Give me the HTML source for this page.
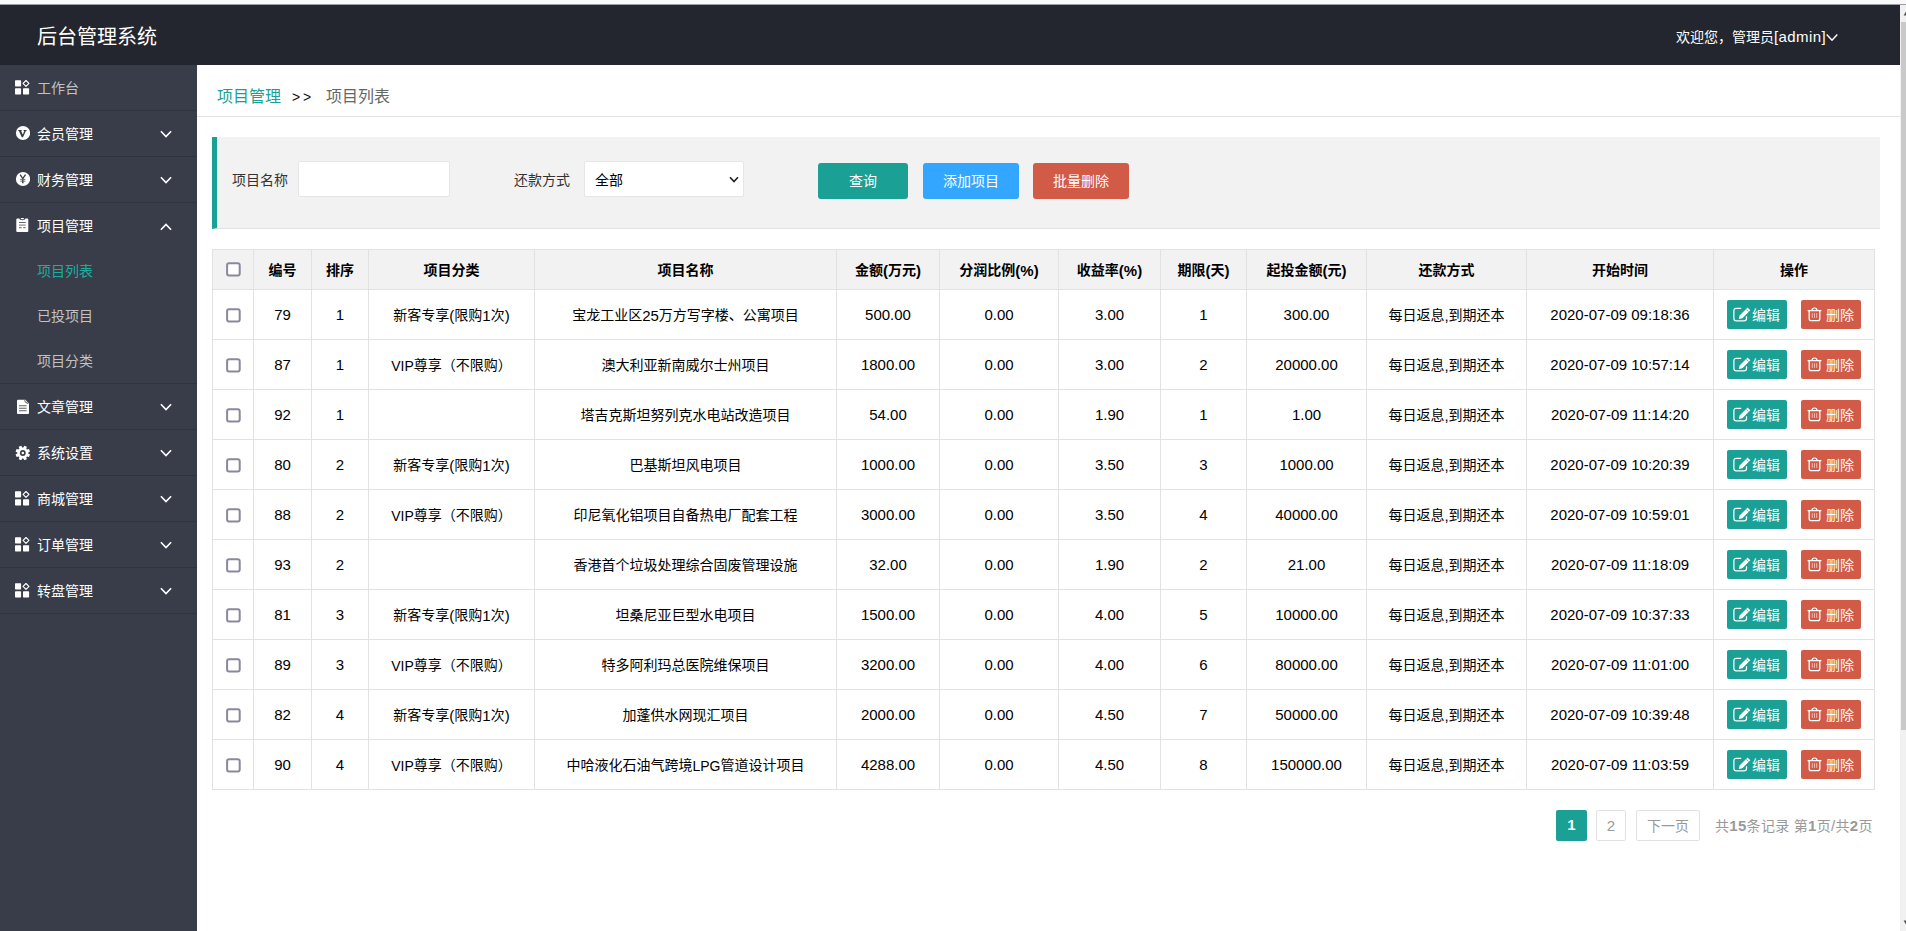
<!DOCTYPE html>
<html lang="zh-CN">
<head>
<meta charset="utf-8">
<title>后台管理系统</title>
<style>
*{box-sizing:border-box;margin:0;padding:0}
html,body{width:1906px;height:931px;overflow:hidden;background:#fff}
body{position:relative;font-family:"Liberation Sans","Noto Sans CJK SC",sans-serif;font-size:14px;color:#333}
a{text-decoration:none;color:inherit}
ul{list-style:none}
.abs{position:absolute}
/* browser strip */
#strip{left:0;top:0;width:1906px;height:4px;background:#f9f9fb}
#stripline{left:0;top:4px;width:1906px;height:1px;background:#9c9da1}
/* header */
#hd{left:0;top:5px;width:1900px;height:60px;background:#23262e;color:#fff}
#logo{left:37px;top:2px;height:60px;line-height:60px;font-size:20px;color:#fff;white-space:nowrap}
#user{left:1676px;top:1px;height:60px;line-height:61px;font-size:14px;color:#fff;white-space:nowrap}
#userchev{left:1825px;top:27.6px}
/* sidebar */
#side{left:0;top:65px;width:197px;height:866px;background:#383d49;color:#fff}
.nav-item{position:relative;height:46px;border-bottom:1px solid #2f343f}
.nav-item .t{position:absolute;left:37px;top:1px;height:45px;line-height:45px;font-size:14px;color:#fff;white-space:nowrap}
.nav-item.dim .t{color:#c2c2c2}
.nav-item svg.ic{position:absolute;left:14px;top:14px;width:16px;height:16px}
.nav-item svg.chev{position:absolute;left:159px;top:18.5px;width:14px;height:9px}
.nav-open{height:181px}
.sub{position:absolute;left:0;top:45px;width:197px}
.sub li{height:45px;line-height:47px;padding-left:37px;font-size:14px;color:#c2c2c2;white-space:nowrap}
.sub li.on{color:#1bad9e}
/* scrollbar */
#sb{left:1900px;top:5px;width:6px;height:926px;background:#f1f1f1}
#sbthumb{left:1901px;top:22px;width:5px;height:708px;background:#c9c9c9}
/* main */
#crumb{left:197px;top:65px;width:1703px;height:52px;border-bottom:1px solid #e2e2e2;white-space:nowrap}
#crumb span{position:absolute;top:1px;height:51px;line-height:62px;font-size:16px}
#quote{left:212px;top:137px;width:1668px;height:92px;background:#f2f2f2;border-left:5px solid #1aa094;border-bottom:1px solid #e2e2e2}
.lbl{font-size:14px;color:#333;height:34px;line-height:36px;white-space:nowrap}
.inp{background:#fff;border:1px solid #e6e6e6;border-radius:2px;height:36px}
input,select,button{font-family:inherit;outline:0;margin:0}
.sel{appearance:none;-webkit-appearance:none;padding:1px 0 0 10px;font-size:14px;color:#000;line-height:34px}
.btn{border:0;padding:0;cursor:pointer;height:36px;line-height:36px;border-radius:3px;color:#fff;text-align:center;font-size:14px;white-space:nowrap}
/* table */
#tb{left:212px;top:249px;border-collapse:separate;border-spacing:0;table-layout:fixed;width:1663px;border-left:1px solid #e2e2e2;border-top:1px solid #e2e2e2}
#tb th,#tb td{border-right:1px solid #e2e2e2;border-bottom:1px solid #e2e2e2;text-align:center;vertical-align:middle;font-size:14px;color:#333;white-space:nowrap;overflow:hidden;padding:0}
#tb th{height:40px;background:#f2f2f2;font-weight:bold;color:#000}
#tb td{height:50px;padding-bottom:2px;color:#000}
#tb th{padding-bottom:2px}
#tb td .ck{top:1.6px}
.ck{display:inline-block;width:16px;height:16px;vertical-align:middle;position:relative;top:.6px;left:1.2px}
i.l{font-style:normal;font-size:15px;position:relative;top:1px}
#user i.l{top:0;letter-spacing:.4px}
i.l.u{font-size:14px;letter-spacing:0}
.ob{display:inline-block;position:relative;top:1px;width:60px;height:29px;border-radius:2px;color:#fff;font-size:14px;vertical-align:middle;text-align:left}
.ob.e{background:#1aa094;margin-right:14px}
.ob.d{background:#d15b47}
.ob svg{position:absolute}
.ob b{position:absolute;font-weight:normal;top:0;height:29px;line-height:30px}
/* pager */
.pg{top:810px;height:31px;line-height:30px;font-size:14px;color:#999;text-align:center;white-space:nowrap}
.pg i.l{top:0}
.pg.bx{border:1px solid #e2e2e2;border-radius:2px;background:#fff}
</style>
</head>
<body>
<div id="strip" class="abs"></div>
<div id="stripline" class="abs"></div>

<div id="hd" class="abs">
  <div id="logo" class="abs">后台管理系统</div>
  <div id="user" class="abs">欢迎您，管理员<i class="l">[admin]</i></div>
  <svg id="userchev" class="abs" width="14" height="10" viewBox="0 0 14 10"><path d="M1.7 1.6 L7 7.2 L12.3 1.6" fill="none" stroke="#fff" stroke-width="1.5"/></svg>
</div>

<div id="side" class="abs">
<div class="nav-item dim"><svg class="ic" viewBox="0 0 16 16"><rect x="1" y="1.2" width="6.1" height="6.2" rx=".7" fill="#fff"/><rect x="1" y="9.2" width="6.1" height="6.3" rx=".7" fill="#fff"/><rect x="9" y="9.2" width="6.1" height="6.3" rx=".7" fill="#fff"/><path d="M12 1.5 L14.95 4.45 L12 7.4 L9.05 4.45Z" fill="none" stroke="#fff" stroke-width="1.15" stroke-linejoin="round"/></svg><span class="t">工作台</span></div>
<div class="nav-item"><svg class="ic" viewBox="0 0 16 16"><circle cx="9" cy="8" r="7.1" fill="#fff"/><path d="M4.3 5.1h3.4v.9h-.6l1.7 3.6 1.5-3.6h-.7v-.9h3v.9h-.7l-2.9 6.2h-1.2l-2.9-6.2h-.6z" fill="#393d49"/></svg><span class="t">会员管理</span><svg class="chev" viewBox="0 0 14 9"><path d="M1.9 1.3 L7 6.6 L12.1 1.3" fill="none" stroke="#fff" stroke-width="1.6"/></svg></div>
<div class="nav-item"><svg class="ic" viewBox="0 0 16 16"><circle cx="9" cy="8" r="7.1" fill="#fff"/><path d="M6.1 3.6 L8.8 7.6 L11.5 3.6" fill="none" stroke="#393d49" stroke-width="1.3"/><path d="M8.8 7.4 V12.3" stroke="#393d49" stroke-width="1.5"/><path d="M6.2 8.4H11.4M6.2 10.2H11.4" stroke="#6d707a" stroke-width="1"/></svg><span class="t">财务管理</span><svg class="chev" viewBox="0 0 14 9"><path d="M1.9 1.3 L7 6.6 L12.1 1.3" fill="none" stroke="#fff" stroke-width="1.6"/></svg></div>
<div class="nav-item nav-open"><svg class="ic" viewBox="0 0 16 16"><path d="M2.3 2.6 q0-1 1-1 h1.9 q.3 1.7 3.1 1.7 t3.1-1.7 h1.9 q1 0 1 1 v11.4 q0 1-1 1 h-10 q-1 0-1-1z" fill="#fff"/><rect x="6.7" y="1" width="3.3" height="1.2" rx=".6" fill="#fff"/><path d="M5 5.5H11.7" stroke="#62656f" stroke-width="1"/><path d="M5 8.1H11.7" stroke="#8d9098" stroke-width="1.3"/><path d="M5 10.7H7.7M9.2 10.7H11.7" stroke="#60636d" stroke-width="1"/></svg><span class="t">项目管理</span><svg class="chev" viewBox="0 0 14 9"><path d="M1.9 7.7 L7 2.4 L12.1 7.7" fill="none" stroke="#fff" stroke-width="1.6"/></svg><ul class="sub"><li class="on">项目列表</li><li>已投项目</li><li>项目分类</li></ul></div>
<div class="nav-item"><svg class="ic" viewBox="0 0 16 16"><path d="M3 2.7 q0-1 1-1 h7.3 l3.7 3.7 v9.6 q0 1-1 1 h-10 q-1 0-1-1z" fill="#fff"/><path d="M10.6 2.3 q.3 2.6 3.4 3.1" fill="none" stroke="#393d49" stroke-width=".9"/><path d="M5 7.8H12.6M5 10.3H12.6M5 12.7H12.6" stroke="#5e616b" stroke-width="1.1"/></svg><span class="t">文章管理</span><svg class="chev" viewBox="0 0 14 9"><path d="M1.9 1.3 L7 6.6 L12.1 1.3" fill="none" stroke="#fff" stroke-width="1.6"/></svg></div>
<div class="nav-item"><svg class="ic" viewBox="0 0 16 16"><path d="M9.36 3.53 L10.29 1.75 L12.87 2.82 L12.27 4.73 L13.07 5.53 L14.98 4.93 L16.05 7.51 L14.27 8.44 L14.27 9.56 L16.05 10.49 L14.98 13.07 L13.07 12.47 L12.27 13.27 L12.87 15.18 L10.29 16.25 L9.36 14.47 L8.24 14.47 L7.31 16.25 L4.73 15.18 L5.33 13.27 L4.53 12.47 L2.62 13.07 L1.55 10.49 L3.33 9.56 L3.33 8.44 L1.55 7.51 L2.62 4.93 L4.53 5.53 L5.33 4.73 L4.73 2.82 L7.31 1.75 L8.24 3.53Z" fill="#fff"/><circle cx="8.8" cy="9.0" r="2.9" fill="#393d49"/><circle cx="8.8" cy="9.0" r="1.25" fill="#fff"/></svg><span class="t">系统设置</span><svg class="chev" viewBox="0 0 14 9"><path d="M1.9 1.3 L7 6.6 L12.1 1.3" fill="none" stroke="#fff" stroke-width="1.6"/></svg></div>
<div class="nav-item"><svg class="ic" viewBox="0 0 16 16"><rect x="1" y="1.2" width="6.1" height="6.2" rx=".7" fill="#fff"/><rect x="1" y="9.2" width="6.1" height="6.3" rx=".7" fill="#fff"/><rect x="9" y="9.2" width="6.1" height="6.3" rx=".7" fill="#fff"/><path d="M12 1.5 L14.95 4.45 L12 7.4 L9.05 4.45Z" fill="none" stroke="#fff" stroke-width="1.15" stroke-linejoin="round"/></svg><span class="t">商城管理</span><svg class="chev" viewBox="0 0 14 9"><path d="M1.9 1.3 L7 6.6 L12.1 1.3" fill="none" stroke="#fff" stroke-width="1.6"/></svg></div>
<div class="nav-item"><svg class="ic" viewBox="0 0 16 16"><rect x="1" y="1.2" width="6.1" height="6.2" rx=".7" fill="#fff"/><rect x="1" y="9.2" width="6.1" height="6.3" rx=".7" fill="#fff"/><rect x="9" y="9.2" width="6.1" height="6.3" rx=".7" fill="#fff"/><path d="M12 1.5 L14.95 4.45 L12 7.4 L9.05 4.45Z" fill="none" stroke="#fff" stroke-width="1.15" stroke-linejoin="round"/></svg><span class="t">订单管理</span><svg class="chev" viewBox="0 0 14 9"><path d="M1.9 1.3 L7 6.6 L12.1 1.3" fill="none" stroke="#fff" stroke-width="1.6"/></svg></div>
<div class="nav-item"><svg class="ic" viewBox="0 0 16 16"><rect x="1" y="1.2" width="6.1" height="6.2" rx=".7" fill="#fff"/><rect x="1" y="9.2" width="6.1" height="6.3" rx=".7" fill="#fff"/><rect x="9" y="9.2" width="6.1" height="6.3" rx=".7" fill="#fff"/><path d="M12 1.5 L14.95 4.45 L12 7.4 L9.05 4.45Z" fill="none" stroke="#fff" stroke-width="1.15" stroke-linejoin="round"/></svg><span class="t">转盘管理</span><svg class="chev" viewBox="0 0 14 9"><path d="M1.9 1.3 L7 6.6 L12.1 1.3" fill="none" stroke="#fff" stroke-width="1.6"/></svg></div>
</div>

<div id="crumb" class="abs">
  <span style="left:20px;color:#1aa094">项目管理</span>
  <span style="left:95px;color:#111;font-size:14px;letter-spacing:2.8px">&gt;&gt;</span>
  <span style="left:129px;color:#666">项目列表</span>
</div>

<div id="quote" class="abs">
<span class="abs lbl" style="left:15px;top:25px">项目名称</span>
<input type="text" class="abs inp" style="left:81px;top:24px;width:152px">
<span class="abs lbl" style="left:297px;top:25px">还款方式</span>
<select class="abs inp sel" style="left:367px;top:24px;width:160px"><option>全部</option></select><svg class="abs" style="left:512px;top:38.5px;pointer-events:none" width="10" height="8" viewBox="0 0 10 8"><path d="M1 1.2 L5 5.6 L9 1.2" fill="none" stroke="#222" stroke-width="1.6"/></svg>
<button type="button" class="abs btn" style="left:601px;top:26px;width:90px;background:#1aa094">查询</button>
<button type="button" class="abs btn" style="left:706px;top:26px;width:96px;background:#33a7ff">添加项目</button>
<button type="button" class="abs btn" style="left:816px;top:26px;width:96px;background:#d15b47">批量删除</button>
</div>

<table id="tb" class="abs">
<colgroup><col style="width:41px"><col style="width:58px"><col style="width:57px"><col style="width:166px"><col style="width:302px"><col style="width:103px"><col style="width:119px"><col style="width:102px"><col style="width:86px"><col style="width:120px"><col style="width:160px"><col style="width:187px"><col style="width:161px"></colgroup>
<tr><th><svg class="ck" viewBox="0 0 16 16"><rect x="1.1" y="1.3" width="12.6" height="12.1" rx="1.9" fill="#fff" stroke="#8a889c" stroke-width="2"/></svg></th><th>编号</th><th>排序</th><th>项目分类</th><th>项目名称</th><th>金额<i class="l">(</i>万元<i class="l">)</i></th><th>分润比例<i class="l">(%)</i></th><th>收益率<i class="l">(%)</i></th><th>期限<i class="l">(</i>天<i class="l">)</i></th><th>起投金额<i class="l">(</i>元<i class="l">)</i></th><th>还款方式</th><th>开始时间</th><th>操作</th></tr>
<tr><td><svg class="ck" viewBox="0 0 16 16"><rect x="1.1" y="1.3" width="12.6" height="12.1" rx="1.9" fill="#fff" stroke="#8a889c" stroke-width="2"/></svg></td><td><i class="l">79</i></td><td><i class="l">1</i></td><td>新客专享<i class="l">(</i>限购<i class="l">1</i>次<i class="l">)</i></td><td>宝龙工业区<i class="l">25</i>万方写字楼、公寓项目</td><td><i class="l">500.00</i></td><td><i class="l">0.00</i></td><td><i class="l">3.00</i></td><td><i class="l">1</i></td><td><i class="l">300.00</i></td><td>每日返息<i class="l">,</i>到期还本</td><td><i class="l">2020-07-09 09:18:36</i></td><td><span class="ob e"><svg style="left:6px;top:7.4px" width="18" height="15" viewBox="0 0 18 15"><path d="M8.2 1.3H3.2Q.9 1.3 .9 3.6V11.6Q.9 13.9 3.2 13.9H11.2Q13.5 13.9 13.5 11.6V9.3" fill="none" stroke="#fff" stroke-width="1.2"/><path d="M14.6 .6 L17.3 3.3 L9.3 11.2 L5.8 12 L6.6 8.5Z" fill="#fff"/><path d="M13.4 2.5l2.2 2.2" stroke="#1aa094" stroke-width=".7"/></svg><b style="left:25px">编辑</b></span><span class="ob d"><svg style="left:6px;top:6.6px" width="15" height="15" viewBox="0 0 15 15"><path d="M.6 3.6H14.4" stroke="#fff" stroke-width="1.3"/><path d="M5 3.4Q5 1 7.5 1T10 3.4" fill="none" stroke="#fff" stroke-width="1.2"/><path d="M2.2 3.8V11.8Q2.2 13.7 4.2 13.7H10.8Q12.8 13.7 12.8 11.8V3.8" fill="none" stroke="#fff" stroke-width="1.3"/><path d="M5.3 6.2V10.9M7.5 6.2V10.9M9.7 6.2V10.9" stroke="#f0b8ae" stroke-width="1"/></svg><b style="left:25px">删除</b></span></td></tr>
<tr><td><svg class="ck" viewBox="0 0 16 16"><rect x="1.1" y="1.3" width="12.6" height="12.1" rx="1.9" fill="#fff" stroke="#8a889c" stroke-width="2"/></svg></td><td><i class="l">87</i></td><td><i class="l">1</i></td><td><i class="l u">VIP</i>尊享（不限购）</td><td>澳大利亚新南威尔士州项目</td><td><i class="l">1800.00</i></td><td><i class="l">0.00</i></td><td><i class="l">3.00</i></td><td><i class="l">2</i></td><td><i class="l">20000.00</i></td><td>每日返息<i class="l">,</i>到期还本</td><td><i class="l">2020-07-09 10:57:14</i></td><td><span class="ob e"><svg style="left:6px;top:7.4px" width="18" height="15" viewBox="0 0 18 15"><path d="M8.2 1.3H3.2Q.9 1.3 .9 3.6V11.6Q.9 13.9 3.2 13.9H11.2Q13.5 13.9 13.5 11.6V9.3" fill="none" stroke="#fff" stroke-width="1.2"/><path d="M14.6 .6 L17.3 3.3 L9.3 11.2 L5.8 12 L6.6 8.5Z" fill="#fff"/><path d="M13.4 2.5l2.2 2.2" stroke="#1aa094" stroke-width=".7"/></svg><b style="left:25px">编辑</b></span><span class="ob d"><svg style="left:6px;top:6.6px" width="15" height="15" viewBox="0 0 15 15"><path d="M.6 3.6H14.4" stroke="#fff" stroke-width="1.3"/><path d="M5 3.4Q5 1 7.5 1T10 3.4" fill="none" stroke="#fff" stroke-width="1.2"/><path d="M2.2 3.8V11.8Q2.2 13.7 4.2 13.7H10.8Q12.8 13.7 12.8 11.8V3.8" fill="none" stroke="#fff" stroke-width="1.3"/><path d="M5.3 6.2V10.9M7.5 6.2V10.9M9.7 6.2V10.9" stroke="#f0b8ae" stroke-width="1"/></svg><b style="left:25px">删除</b></span></td></tr>
<tr><td><svg class="ck" viewBox="0 0 16 16"><rect x="1.1" y="1.3" width="12.6" height="12.1" rx="1.9" fill="#fff" stroke="#8a889c" stroke-width="2"/></svg></td><td><i class="l">92</i></td><td><i class="l">1</i></td><td></td><td>塔吉克斯坦努列克水电站改造项目</td><td><i class="l">54.00</i></td><td><i class="l">0.00</i></td><td><i class="l">1.90</i></td><td><i class="l">1</i></td><td><i class="l">1.00</i></td><td>每日返息<i class="l">,</i>到期还本</td><td><i class="l">2020-07-09 11:14:20</i></td><td><span class="ob e"><svg style="left:6px;top:7.4px" width="18" height="15" viewBox="0 0 18 15"><path d="M8.2 1.3H3.2Q.9 1.3 .9 3.6V11.6Q.9 13.9 3.2 13.9H11.2Q13.5 13.9 13.5 11.6V9.3" fill="none" stroke="#fff" stroke-width="1.2"/><path d="M14.6 .6 L17.3 3.3 L9.3 11.2 L5.8 12 L6.6 8.5Z" fill="#fff"/><path d="M13.4 2.5l2.2 2.2" stroke="#1aa094" stroke-width=".7"/></svg><b style="left:25px">编辑</b></span><span class="ob d"><svg style="left:6px;top:6.6px" width="15" height="15" viewBox="0 0 15 15"><path d="M.6 3.6H14.4" stroke="#fff" stroke-width="1.3"/><path d="M5 3.4Q5 1 7.5 1T10 3.4" fill="none" stroke="#fff" stroke-width="1.2"/><path d="M2.2 3.8V11.8Q2.2 13.7 4.2 13.7H10.8Q12.8 13.7 12.8 11.8V3.8" fill="none" stroke="#fff" stroke-width="1.3"/><path d="M5.3 6.2V10.9M7.5 6.2V10.9M9.7 6.2V10.9" stroke="#f0b8ae" stroke-width="1"/></svg><b style="left:25px">删除</b></span></td></tr>
<tr><td><svg class="ck" viewBox="0 0 16 16"><rect x="1.1" y="1.3" width="12.6" height="12.1" rx="1.9" fill="#fff" stroke="#8a889c" stroke-width="2"/></svg></td><td><i class="l">80</i></td><td><i class="l">2</i></td><td>新客专享<i class="l">(</i>限购<i class="l">1</i>次<i class="l">)</i></td><td>巴基斯坦风电项目</td><td><i class="l">1000.00</i></td><td><i class="l">0.00</i></td><td><i class="l">3.50</i></td><td><i class="l">3</i></td><td><i class="l">1000.00</i></td><td>每日返息<i class="l">,</i>到期还本</td><td><i class="l">2020-07-09 10:20:39</i></td><td><span class="ob e"><svg style="left:6px;top:7.4px" width="18" height="15" viewBox="0 0 18 15"><path d="M8.2 1.3H3.2Q.9 1.3 .9 3.6V11.6Q.9 13.9 3.2 13.9H11.2Q13.5 13.9 13.5 11.6V9.3" fill="none" stroke="#fff" stroke-width="1.2"/><path d="M14.6 .6 L17.3 3.3 L9.3 11.2 L5.8 12 L6.6 8.5Z" fill="#fff"/><path d="M13.4 2.5l2.2 2.2" stroke="#1aa094" stroke-width=".7"/></svg><b style="left:25px">编辑</b></span><span class="ob d"><svg style="left:6px;top:6.6px" width="15" height="15" viewBox="0 0 15 15"><path d="M.6 3.6H14.4" stroke="#fff" stroke-width="1.3"/><path d="M5 3.4Q5 1 7.5 1T10 3.4" fill="none" stroke="#fff" stroke-width="1.2"/><path d="M2.2 3.8V11.8Q2.2 13.7 4.2 13.7H10.8Q12.8 13.7 12.8 11.8V3.8" fill="none" stroke="#fff" stroke-width="1.3"/><path d="M5.3 6.2V10.9M7.5 6.2V10.9M9.7 6.2V10.9" stroke="#f0b8ae" stroke-width="1"/></svg><b style="left:25px">删除</b></span></td></tr>
<tr><td><svg class="ck" viewBox="0 0 16 16"><rect x="1.1" y="1.3" width="12.6" height="12.1" rx="1.9" fill="#fff" stroke="#8a889c" stroke-width="2"/></svg></td><td><i class="l">88</i></td><td><i class="l">2</i></td><td><i class="l u">VIP</i>尊享（不限购）</td><td>印尼氧化铝项目自备热电厂配套工程</td><td><i class="l">3000.00</i></td><td><i class="l">0.00</i></td><td><i class="l">3.50</i></td><td><i class="l">4</i></td><td><i class="l">40000.00</i></td><td>每日返息<i class="l">,</i>到期还本</td><td><i class="l">2020-07-09 10:59:01</i></td><td><span class="ob e"><svg style="left:6px;top:7.4px" width="18" height="15" viewBox="0 0 18 15"><path d="M8.2 1.3H3.2Q.9 1.3 .9 3.6V11.6Q.9 13.9 3.2 13.9H11.2Q13.5 13.9 13.5 11.6V9.3" fill="none" stroke="#fff" stroke-width="1.2"/><path d="M14.6 .6 L17.3 3.3 L9.3 11.2 L5.8 12 L6.6 8.5Z" fill="#fff"/><path d="M13.4 2.5l2.2 2.2" stroke="#1aa094" stroke-width=".7"/></svg><b style="left:25px">编辑</b></span><span class="ob d"><svg style="left:6px;top:6.6px" width="15" height="15" viewBox="0 0 15 15"><path d="M.6 3.6H14.4" stroke="#fff" stroke-width="1.3"/><path d="M5 3.4Q5 1 7.5 1T10 3.4" fill="none" stroke="#fff" stroke-width="1.2"/><path d="M2.2 3.8V11.8Q2.2 13.7 4.2 13.7H10.8Q12.8 13.7 12.8 11.8V3.8" fill="none" stroke="#fff" stroke-width="1.3"/><path d="M5.3 6.2V10.9M7.5 6.2V10.9M9.7 6.2V10.9" stroke="#f0b8ae" stroke-width="1"/></svg><b style="left:25px">删除</b></span></td></tr>
<tr><td><svg class="ck" viewBox="0 0 16 16"><rect x="1.1" y="1.3" width="12.6" height="12.1" rx="1.9" fill="#fff" stroke="#8a889c" stroke-width="2"/></svg></td><td><i class="l">93</i></td><td><i class="l">2</i></td><td></td><td>香港首个垃圾处理综合固废管理设施</td><td><i class="l">32.00</i></td><td><i class="l">0.00</i></td><td><i class="l">1.90</i></td><td><i class="l">2</i></td><td><i class="l">21.00</i></td><td>每日返息<i class="l">,</i>到期还本</td><td><i class="l">2020-07-09 11:18:09</i></td><td><span class="ob e"><svg style="left:6px;top:7.4px" width="18" height="15" viewBox="0 0 18 15"><path d="M8.2 1.3H3.2Q.9 1.3 .9 3.6V11.6Q.9 13.9 3.2 13.9H11.2Q13.5 13.9 13.5 11.6V9.3" fill="none" stroke="#fff" stroke-width="1.2"/><path d="M14.6 .6 L17.3 3.3 L9.3 11.2 L5.8 12 L6.6 8.5Z" fill="#fff"/><path d="M13.4 2.5l2.2 2.2" stroke="#1aa094" stroke-width=".7"/></svg><b style="left:25px">编辑</b></span><span class="ob d"><svg style="left:6px;top:6.6px" width="15" height="15" viewBox="0 0 15 15"><path d="M.6 3.6H14.4" stroke="#fff" stroke-width="1.3"/><path d="M5 3.4Q5 1 7.5 1T10 3.4" fill="none" stroke="#fff" stroke-width="1.2"/><path d="M2.2 3.8V11.8Q2.2 13.7 4.2 13.7H10.8Q12.8 13.7 12.8 11.8V3.8" fill="none" stroke="#fff" stroke-width="1.3"/><path d="M5.3 6.2V10.9M7.5 6.2V10.9M9.7 6.2V10.9" stroke="#f0b8ae" stroke-width="1"/></svg><b style="left:25px">删除</b></span></td></tr>
<tr><td><svg class="ck" viewBox="0 0 16 16"><rect x="1.1" y="1.3" width="12.6" height="12.1" rx="1.9" fill="#fff" stroke="#8a889c" stroke-width="2"/></svg></td><td><i class="l">81</i></td><td><i class="l">3</i></td><td>新客专享<i class="l">(</i>限购<i class="l">1</i>次<i class="l">)</i></td><td>坦桑尼亚巨型水电项目</td><td><i class="l">1500.00</i></td><td><i class="l">0.00</i></td><td><i class="l">4.00</i></td><td><i class="l">5</i></td><td><i class="l">10000.00</i></td><td>每日返息<i class="l">,</i>到期还本</td><td><i class="l">2020-07-09 10:37:33</i></td><td><span class="ob e"><svg style="left:6px;top:7.4px" width="18" height="15" viewBox="0 0 18 15"><path d="M8.2 1.3H3.2Q.9 1.3 .9 3.6V11.6Q.9 13.9 3.2 13.9H11.2Q13.5 13.9 13.5 11.6V9.3" fill="none" stroke="#fff" stroke-width="1.2"/><path d="M14.6 .6 L17.3 3.3 L9.3 11.2 L5.8 12 L6.6 8.5Z" fill="#fff"/><path d="M13.4 2.5l2.2 2.2" stroke="#1aa094" stroke-width=".7"/></svg><b style="left:25px">编辑</b></span><span class="ob d"><svg style="left:6px;top:6.6px" width="15" height="15" viewBox="0 0 15 15"><path d="M.6 3.6H14.4" stroke="#fff" stroke-width="1.3"/><path d="M5 3.4Q5 1 7.5 1T10 3.4" fill="none" stroke="#fff" stroke-width="1.2"/><path d="M2.2 3.8V11.8Q2.2 13.7 4.2 13.7H10.8Q12.8 13.7 12.8 11.8V3.8" fill="none" stroke="#fff" stroke-width="1.3"/><path d="M5.3 6.2V10.9M7.5 6.2V10.9M9.7 6.2V10.9" stroke="#f0b8ae" stroke-width="1"/></svg><b style="left:25px">删除</b></span></td></tr>
<tr><td><svg class="ck" viewBox="0 0 16 16"><rect x="1.1" y="1.3" width="12.6" height="12.1" rx="1.9" fill="#fff" stroke="#8a889c" stroke-width="2"/></svg></td><td><i class="l">89</i></td><td><i class="l">3</i></td><td><i class="l u">VIP</i>尊享（不限购）</td><td>特多阿利玛总医院维保项目</td><td><i class="l">3200.00</i></td><td><i class="l">0.00</i></td><td><i class="l">4.00</i></td><td><i class="l">6</i></td><td><i class="l">80000.00</i></td><td>每日返息<i class="l">,</i>到期还本</td><td><i class="l">2020-07-09 11:01:00</i></td><td><span class="ob e"><svg style="left:6px;top:7.4px" width="18" height="15" viewBox="0 0 18 15"><path d="M8.2 1.3H3.2Q.9 1.3 .9 3.6V11.6Q.9 13.9 3.2 13.9H11.2Q13.5 13.9 13.5 11.6V9.3" fill="none" stroke="#fff" stroke-width="1.2"/><path d="M14.6 .6 L17.3 3.3 L9.3 11.2 L5.8 12 L6.6 8.5Z" fill="#fff"/><path d="M13.4 2.5l2.2 2.2" stroke="#1aa094" stroke-width=".7"/></svg><b style="left:25px">编辑</b></span><span class="ob d"><svg style="left:6px;top:6.6px" width="15" height="15" viewBox="0 0 15 15"><path d="M.6 3.6H14.4" stroke="#fff" stroke-width="1.3"/><path d="M5 3.4Q5 1 7.5 1T10 3.4" fill="none" stroke="#fff" stroke-width="1.2"/><path d="M2.2 3.8V11.8Q2.2 13.7 4.2 13.7H10.8Q12.8 13.7 12.8 11.8V3.8" fill="none" stroke="#fff" stroke-width="1.3"/><path d="M5.3 6.2V10.9M7.5 6.2V10.9M9.7 6.2V10.9" stroke="#f0b8ae" stroke-width="1"/></svg><b style="left:25px">删除</b></span></td></tr>
<tr><td><svg class="ck" viewBox="0 0 16 16"><rect x="1.1" y="1.3" width="12.6" height="12.1" rx="1.9" fill="#fff" stroke="#8a889c" stroke-width="2"/></svg></td><td><i class="l">82</i></td><td><i class="l">4</i></td><td>新客专享<i class="l">(</i>限购<i class="l">1</i>次<i class="l">)</i></td><td>加蓬供水网现汇项目</td><td><i class="l">2000.00</i></td><td><i class="l">0.00</i></td><td><i class="l">4.50</i></td><td><i class="l">7</i></td><td><i class="l">50000.00</i></td><td>每日返息<i class="l">,</i>到期还本</td><td><i class="l">2020-07-09 10:39:48</i></td><td><span class="ob e"><svg style="left:6px;top:7.4px" width="18" height="15" viewBox="0 0 18 15"><path d="M8.2 1.3H3.2Q.9 1.3 .9 3.6V11.6Q.9 13.9 3.2 13.9H11.2Q13.5 13.9 13.5 11.6V9.3" fill="none" stroke="#fff" stroke-width="1.2"/><path d="M14.6 .6 L17.3 3.3 L9.3 11.2 L5.8 12 L6.6 8.5Z" fill="#fff"/><path d="M13.4 2.5l2.2 2.2" stroke="#1aa094" stroke-width=".7"/></svg><b style="left:25px">编辑</b></span><span class="ob d"><svg style="left:6px;top:6.6px" width="15" height="15" viewBox="0 0 15 15"><path d="M.6 3.6H14.4" stroke="#fff" stroke-width="1.3"/><path d="M5 3.4Q5 1 7.5 1T10 3.4" fill="none" stroke="#fff" stroke-width="1.2"/><path d="M2.2 3.8V11.8Q2.2 13.7 4.2 13.7H10.8Q12.8 13.7 12.8 11.8V3.8" fill="none" stroke="#fff" stroke-width="1.3"/><path d="M5.3 6.2V10.9M7.5 6.2V10.9M9.7 6.2V10.9" stroke="#f0b8ae" stroke-width="1"/></svg><b style="left:25px">删除</b></span></td></tr>
<tr><td><svg class="ck" viewBox="0 0 16 16"><rect x="1.1" y="1.3" width="12.6" height="12.1" rx="1.9" fill="#fff" stroke="#8a889c" stroke-width="2"/></svg></td><td><i class="l">90</i></td><td><i class="l">4</i></td><td><i class="l u">VIP</i>尊享（不限购）</td><td>中哈液化石油气跨境<i class="l u">LPG</i>管道设计项目</td><td><i class="l">4288.00</i></td><td><i class="l">0.00</i></td><td><i class="l">4.50</i></td><td><i class="l">8</i></td><td><i class="l">150000.00</i></td><td>每日返息<i class="l">,</i>到期还本</td><td><i class="l">2020-07-09 11:03:59</i></td><td><span class="ob e"><svg style="left:6px;top:7.4px" width="18" height="15" viewBox="0 0 18 15"><path d="M8.2 1.3H3.2Q.9 1.3 .9 3.6V11.6Q.9 13.9 3.2 13.9H11.2Q13.5 13.9 13.5 11.6V9.3" fill="none" stroke="#fff" stroke-width="1.2"/><path d="M14.6 .6 L17.3 3.3 L9.3 11.2 L5.8 12 L6.6 8.5Z" fill="#fff"/><path d="M13.4 2.5l2.2 2.2" stroke="#1aa094" stroke-width=".7"/></svg><b style="left:25px">编辑</b></span><span class="ob d"><svg style="left:6px;top:6.6px" width="15" height="15" viewBox="0 0 15 15"><path d="M.6 3.6H14.4" stroke="#fff" stroke-width="1.3"/><path d="M5 3.4Q5 1 7.5 1T10 3.4" fill="none" stroke="#fff" stroke-width="1.2"/><path d="M2.2 3.8V11.8Q2.2 13.7 4.2 13.7H10.8Q12.8 13.7 12.8 11.8V3.8" fill="none" stroke="#fff" stroke-width="1.3"/><path d="M5.3 6.2V10.9M7.5 6.2V10.9M9.7 6.2V10.9" stroke="#f0b8ae" stroke-width="1"/></svg><b style="left:25px">删除</b></span></td></tr>
</table>

<span class="abs pg" style="left:1556px;width:31px;background:#1aa094;color:#fff;font-weight:bold;border-radius:2px"><i class="l">1</i></span>
<span class="abs pg bx" style="left:1596px;width:30px"><i class="l">2</i></span>
<span class="abs pg bx" style="left:1636px;width:64px">下一页</span>
<span class="abs pg" style="left:1715px;letter-spacing:.3px;line-height:32px">共<b><i class="l">15</i></b>条记录 第<b><i class="l">1</i></b>页<i class="l">/</i>共<b><i class="l">2</i></b>页</span>

<div id="sb" class="abs"></div>
<div id="sbthumb" class="abs"></div>
<svg class="abs" style="left:1900px;top:5px" width="6" height="17" viewBox="0 0 6 17"><path d="M6 6.6 L3.6 10.6 L6 10.6Z" fill="#505050"/></svg>
<svg class="abs" style="left:1900px;top:914px" width="6" height="17" viewBox="0 0 6 17"><path d="M6 6.4 L3.6 6.4 L6 10.4Z" fill="#505050"/></svg>
</body>
</html>
